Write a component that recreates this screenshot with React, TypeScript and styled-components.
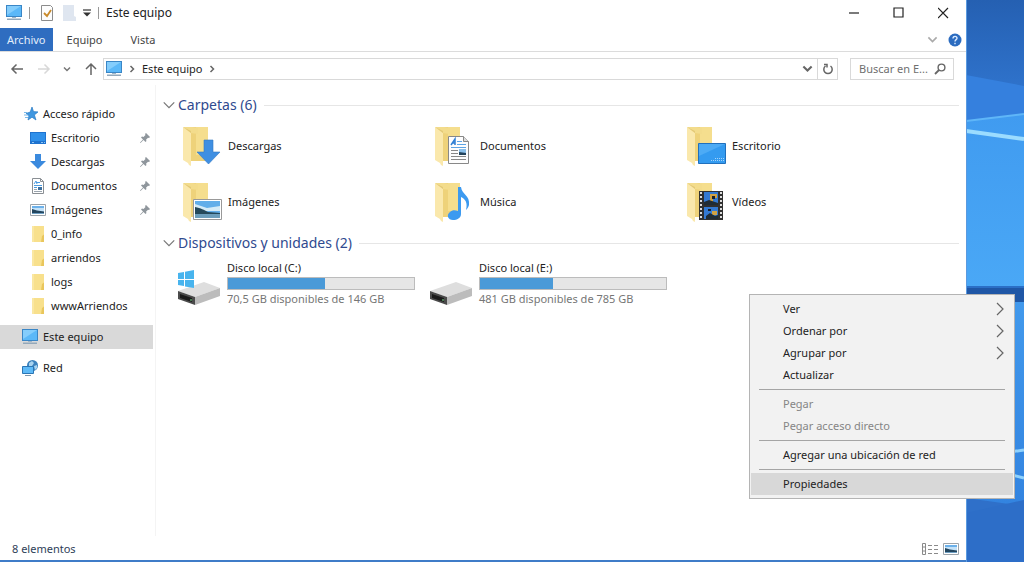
import React from "react";
import styled, { createGlobalStyle } from "styled-components";

const Global = createGlobalStyle`
  *, *::before, *::after { box-sizing: border-box; }
  body {
    margin: 0;
    font-family: "Noto Sans", "Open Sans", sans-serif;
    font-size: 12px;
    line-height: 16px;
    color: #222;
    background: #2f74cc;
  }
  button, input { font: inherit; color: inherit; }
  button { border: 0; padding: 0; background: none; cursor: default; }
  svg { display: block; flex: none; }
  ul { list-style: none; margin: 0; padding: 0; }
`;

const Desktop = styled.div`
  position: relative;
  display: flex;
  min-height: 100vh;
`;

const Wallpaper = styled.div`
  position: relative;
  flex: none;
  width: 58px;
  svg { position: absolute; inset: 0; width: 100%; height: 100%; }
`;

const Explorer = styled.main`
  flex: 1;
  min-width: 0;
  display: flex;
  flex-direction: column;
  background: #fff;
  border-bottom: 2px solid #3f7cc8;
`;

const TitleBar = styled.header`
  display: flex;
  align-items: center;
  height: 28px;
  padding: 0 0 2px 5px;
`;

const QuickTools = styled.div`
  display: flex;
  align-items: center;
  gap: 6px;
`;

const Divider = styled.span`
  width: 1px;
  height: 12px;
  background: #999;
`;

const Title = styled.h1`
  flex: 1;
  margin: 0 0 0 7px;
  font-size: 12px;
  font-weight: 400;
`;

const CaptionButton = styled.button`
  display: flex;
  align-items: center;
  justify-content: center;
  width: 45px;
  height: 26px;
`;

const Ribbon = styled.nav`
  display: flex;
  align-items: center;
  height: 24px;
  border-bottom: 1px solid #dcdcdc;
`;

const Tab = styled.button<{ $active?: boolean }>`
  height: 23px;
  padding: 0 ${(p) => (p.$active ? 7 : 14)}px;
  font-size: 11px;
  color: ${(p) => (p.$active ? "#e4eefb" : "#444")};
  background: ${(p) => (p.$active ? "#2f6dc0" : "transparent")};
`;

const RibbonEnd = styled.div`
  display: flex;
  align-items: center;
  gap: 10px;
  margin-left: auto;
  padding-right: 4px;
`;

const NavBar = styled.div`
  display: flex;
  align-items: center;
  height: 33px;
  padding: 0 12px 0 10px;
`;

const NavButtons = styled.div`
  display: flex;
  align-items: center;
  justify-content: space-between;
  width: 88px;
  margin-right: 5px;
`;

const Address = styled.div`
  flex: 1;
  display: flex;
  align-items: center;
  height: 22px;
  border: 1px solid #d9d9d9;
`;

const Crumbs = styled.div`
  flex: 1;
  display: flex;
  align-items: center;
  gap: 5px;
  padding-left: 1px;
  font-size: 11px;
  & > button { padding: 0 1px; }
`;

const AddressButton = styled.button<{ $ruled?: boolean }>`
  display: flex;
  align-items: center;
  justify-content: center;
  width: 20px;
  height: 20px;
  border-left: ${(p) => (p.$ruled ? "1px solid #d9d9d9" : "0")};
`;

const SearchBox = styled.label`
  display: flex;
  align-items: center;
  width: 104px;
  height: 22px;
  margin-left: 12px;
  padding: 0 7px 0 8px;
  border: 1px solid #d9d9d9;
  input {
    flex: 1;
    min-width: 0;
    padding: 0;
    border: 0;
    outline: 0;
    font-size: 11px;
    background: none;
  }
  input::placeholder { color: #6f6f6f; opacity: 1; }
`;

const Body = styled.div`
  flex: 1;
  display: flex;
`;

const Sidebar = styled.nav`
  flex: none;
  width: 156px;
  padding: 17px 2px 0 0;
  border-right: 1px solid #f4f4f4;
`;

const TreeItem = styled.button<{ $level?: number; $selected?: boolean; $spaced?: boolean }>`
  display: flex;
  align-items: center;
  gap: 4px;
  width: 100%;
  height: 24px;
  margin-top: ${(p) => (p.$spaced ? 7 : 0)}px;
  padding: 0 2px 0 ${(p) => (p.$level === 2 ? 29 : 21)}px;
  font-size: 11px;
  background: ${(p) => (p.$selected ? "#d9d9d9" : "transparent")};
  & > svg:last-child:not(:first-child) { margin-left: auto; }
`;

const Content = styled.section`
  flex: 1;
  min-width: 0;
  padding: 10px 7px 0 6px;
`;

const GroupHeader = styled.button`
  display: flex;
  align-items: center;
  gap: 2px;
  width: 100%;
  height: 20px;
  font-size: 14px;
  color: #2f4a8f;
  &::after {
    content: "";
    flex: 1;
    height: 1px;
    margin-left: 5px;
    background: #e6e6e6;
  }
`;

const Tiles = styled.ul<{ $indent: number }>`
  display: grid;
  grid-template-columns: repeat(auto-fill, 252px);
  padding: 3px 0 3px ${(p) => p.$indent}px;
`;

const Tile = styled.li`
  display: flex;
  align-items: center;
  gap: 6px;
  height: 56px;
  font-size: 11px;
`;

const DriveTile = styled.li`
  display: flex;
  align-items: center;
  gap: 6px;
  height: 54px;
  font-size: 11px;
`;

const DriveInfo = styled.div`
  display: flex;
  flex-direction: column;
  gap: 1px;
  width: 188px;
  small { font-size: 11px; color: #767676; white-space: nowrap; }
`;

const Gauge = styled.div`
  height: 13px;
  border: 1px solid #bcbcbc;
  background: #e6e6e6;
`;

const GaugeFill = styled.div`
  height: 100%;
  background: #4a9ad8;
`;

const StatusBar = styled.footer`
  display: flex;
  align-items: center;
  justify-content: space-between;
  height: 24px;
  padding: 2px 6px 0 12px;
  font-size: 11px;
  color: #2e4057;
`;

const ViewButtons = styled.div`
  display: flex;
  align-items: center;
  gap: 4px;
`;

const Menu = styled.div`
  position: absolute;
  top: 294px;
  right: 9px;
  width: 266px;
  padding: 3px 1px;
  border: 1px solid #b4b4b4;
  background: #f2f2f2;
`;

const MenuItem = styled.button<{ $hover?: boolean }>`
  display: flex;
  align-items: center;
  justify-content: space-between;
  width: 100%;
  height: 22px;
  padding: 0 8px 0 32px;
  font-size: 11px;
  background: ${(p) => (p.$hover ? "#d8d8d8" : "transparent")};
  &:disabled { color: #858585; }
`;

const MenuRule = styled.hr`
  height: 1px;
  margin: 3px 8px;
  border: 0;
  background: #a5a5a5;
`;

/* ---------- icons ---------- */

const Monitor = ({ w = 18 }: { w?: number }) => (
  <svg width={w} height={w} viewBox="0 0 18 18">
    <rect x="1" y="1" width="16" height="12" fill="#3a86c6" />
    <path d="M2 2h14v10H2z" fill="#5bb8f8" />
    <path d="M2 2h14L2 11z" fill="#84cdfc" />
    <path d="M7 13h4v1H7z" fill="#9fb6c8" />
    <path d="M2 14.500h14v1.500H2z" fill="#93a8ba" />
  </svg>
);

const Chevron = ({ dir = "right", s = 8, color = "#666", sw = 1.5 }: { dir?: "right" | "down"; s?: number; color?: string; sw?: number }) => (
  <svg width={s} height={s} viewBox="0 0 8 8" fill="none" stroke={color} strokeWidth={sw}>
    <path d={dir === "right" ? "M2.5 1l3 3-3 3" : "M1 2.5l3 3 3-3"} />
  </svg>
);

const Star = () => (
  <svg width="18" height="16" viewBox="0 0 18 16">
    <path d="M11 1l1.500 4.600 4.500.3-3.600 3 1.600 5.100-4-2.800L7 14l1-4.300L5 7.400l4.200-1.300z" fill="#3f97e0" stroke="#2a7bc4" strokeWidth=".7" />
    <path d="M3 9h4M4 11.500h3M3 6.500h3" stroke="#79b9ea" />
  </svg>
);

const Screen = () => (
  <svg width="18" height="16" viewBox="0 0 18 16">
    <path d="M1 2h16v12H1z" fill="#1f73cf" />
    <path d="M2 3h14v8H2z" fill="#2f90ea" />
    <path d="M3 12.500h2M12 12.500h4" stroke="#8dc4f4" strokeDasharray="2 1" />
  </svg>
);

const Arrow = () => (
  <svg width="18" height="18" viewBox="0 0 18 18">
    <path d="M6 1h6v7h5l-8 8-8-8h5z" fill="#3b8ade" />
  </svg>
);

const Page = () => (
  <svg width="18" height="18" viewBox="0 0 18 18">
    <path d="M3.500 1.500h8l3 3v12h-11z" fill="#fff" stroke="#8a8f94" />
    <path d="M11.500 1.500v3h3" fill="none" stroke="#8a8f94" />
    <path d="M5 7l2-3 1 3M8 5.500h3M5 8.500h8M5 10.500h3" fill="none" stroke="#4b9be0" />
    <path d="M5 12.500h3M5 14.500h8" stroke="#9aa4ad" />
    <path d="M9 10h4v3H9z" fill="#3c6f9e" />
  </svg>
);

const Picture = ({ w = 18 }: { w?: number }) => (
  <svg width={w} height={w} viewBox="0 0 18 18">
    <path d="M1.500 3.500h15v11h-15z" fill="#fff" stroke="#9da4aa" />
    <path d="M3 5h12v8H3z" fill="#c4e2f8" />
    <path d="M3 5h12v2H3z" fill="#6cb1ea" />
    <path d="M3 8l5 1.500 7 1V12H3z" fill="#23465f" />
    <path d="M3 12h12v1H3z" fill="#6fa0c4" />
  </svg>
);

const SmallFolder = () => (
  <svg width="18" height="18" viewBox="0 0 18 18">
    <path d="M3 1h12v16H3z" fill="#f8e08c" />
    <path d="M13 11l2-1.500V17h-3z" fill="#e9c65c" />
    <path d="M3 1h2v16H3z" fill="#fae7a2" />
  </svg>
);

const Network = () => (
  <svg width="18" height="18" viewBox="0 0 18 18">
    <circle cx="11.500" cy="6.500" r="5.500" fill="#3c82bd" />
    <path d="M8 4l3-2 2 2-2 3H8zM13 7l3-1v3l-2 2z" fill="#a9d3ef" />
    <path d="M1.500 7.500h11v7h-11z" fill="#5fbaf7" stroke="#2b76b4" />
    <path d="M4 16.500h6" stroke="#7d97ad" />
  </svg>
);

const Pin = () => (
  <svg width="12" height="12" viewBox="0 0 12 12">
    <path d="M7 1l4 4-1 1-1-.3-2 2L7.500 9l-1 1L4.500 8 1.500 11 1 10.500l3-3L2 5.500l1-1 1.500.4 2-2L6 2z" fill="#8f969c" />
  </svg>
);

const BigFolder = ({ children }: { children: React.ReactNode }) => (
  <svg width="40" height="44" viewBox="0 0 40 44">
    <path d="M9 3h17v33l-3 1H9z" fill="#eed27a" />
    <path d="M14 3h12v28H14z" fill="#f5de8e" />
    <path d="M1 3l8 5v34l-2-1-1-2-5-3z" fill="#fae8ac" />
    <path d="M1 3h9l6 1v6l-7-1z" fill="#f3dc8c" />
    <path d="M1 3l8 4v2z" fill="#e3c977" />
    {children}
  </svg>
);

const downloadBadge = <path d="M22 16h9v12h7L26.500 40 15 28h7z" fill="#3f8fe2" stroke="#3479c4" strokeWidth=".6" />;
const documentBadge = (
  <g>
    <path d="M14.500 12.500h15l5 5v22h-20z" fill="#fdfdfd" stroke="#888" />
    <path d="M29.500 12.500v5h5" fill="#ddd" stroke="#888" />
    <path d="M17 21l4-6v6M18 19h3" fill="none" stroke="#2f7fd4" strokeWidth="1.500" />
    <path d="M23 17.500h5M23 20.500h9M17 23.500h15" stroke="#5da4e4" />
    <path d="M17 26.500h7M17 29.500h7M17 32.500h15M17 35.500h15" stroke="#888" />
    <path d="M25 25h7v6h-7z" fill="#8bc0ea" />
    <path d="M25 28l7 1v2h-7z" fill="#24445c" />
  </g>
);
const desktopBadge = (
  <g>
    <path d="M12.500 19.500h27v20h-27z" fill="#349bf0" stroke="#2070bd" />
    <path d="M13 20h26L13 32z" fill="#4dabf5" />
    <path d="M25 36.500h13M29 34.500h9" stroke="#a3d4fb" strokeDasharray="1 1" />
  </g>
);
const pictureBadge = (
  <g>
    <path d="M11.500 19.500h28v20h-28z" fill="#fff" stroke="#999" />
    <path d="M13 21h25v17H13z" fill="#62aee9" />
    <path d="M13 24l12 4 13-2v5H13z" fill="#d4ebf7" />
    <path d="M13 27c6 1 9 3 13 5l12 1v2H13z" fill="#24485a" />
    <path d="M13 34h25v4H13z" fill="#6b9dbb" />
  </g>
);
const musicBadge = (
  <path d="M24 7h3c1 8 9 8 8 18-1 3-2 4-3 5 2-8-1-11-5-13v17c0 4-4 6-8 6-5 0-7-5-3-8 2-2 5-2 8-1z" fill="#3c9af0" />
);
const videoBadge = (
  <g>
    <path d="M13 11h24v29H13z" fill="#303030" />
    <path d="M15 12v28M35 12v28" stroke="#ddd" strokeWidth="2" strokeDasharray="2 2" />
    <path d="M18 12h14v13H18zM18 27h14v12H18z" fill="#3379d2" />
    <path d="M24 14h7v4h-4v4h-3zM26 31h5v4h-5z" fill="#d1a243" />
    <path d="M18 22l5-2 9 3v2H18zM20 36l4-3 5 3 3-1v4H20z" fill="#202c35" />
    <path d="M26 16h3v3h-3zM22 29h3v2h-3z" fill="#17212b" />
  </g>
);

const Drive = ({ system }: { system?: boolean }) => (
  <svg width="44" height="46" viewBox="0 -8 44 46">
    <path d="M1 23l26-9 16 6-25 9z" fill="#dedede" />
    <path d="M1 23l17 6v8L1 31z" fill="#4a4a4a" />
    <path d="M18 29l25-9v8l-25 9z" fill="#bcbcbc" />
    <path d="M3 26l12 4v4L3 30z" fill="#1a1a1a" />
    <path d="M13 32h2" stroke="#77d68a" />
    {system && (
      <path d="M1 5l6-1v7H1zM8 3.800L17 2v9H8zM1 12h6v6l-6-1zM8 12h9v8l-9-1.600z" fill="#48b4ee" />
    )}
  </svg>
);

const folders: { name: string; badge: React.ReactNode }[] = [
  { name: "Descargas", badge: downloadBadge },
  { name: "Documentos", badge: documentBadge },
  { name: "Escritorio", badge: desktopBadge },
  { name: "Imágenes", badge: pictureBadge },
  { name: "Música", badge: musicBadge },
  { name: "Vídeos", badge: videoBadge },
];

const pinned = [
  { name: "Escritorio", icon: <Screen /> },
  { name: "Descargas", icon: <Arrow /> },
  { name: "Documentos", icon: <Page /> },
  { name: "Imágenes", icon: <Picture /> },
];

const recent = ["0_info", "arriendos", "logs", "wwwArriendos"];

const drives = [
  { name: "Disco local (C:)", free: "70,5 GB disponibles de 146 GB", used: 52, system: true },
  { name: "Disco local (E:)", free: "481 GB disponibles de 785 GB", used: 39, system: false },
];

export default function App() {
  return (
    <Desktop>
      <Global />
      <Explorer>
        <TitleBar>
          <QuickTools>
            <Monitor />
            <Divider />
            <button aria-label="Propiedades del equipo">
              <svg width="20" height="18" viewBox="0 0 20 18">
                <path d="M5.500 1.500h9l2 2v13h-11z" fill="#fdfdfd" stroke="#8c8c8c" />
                <path d="M8 9l3 3 4-6" fill="none" stroke="#c98a2b" strokeWidth="1.800" />
              </svg>
            </button>
            <button aria-label="Nueva carpeta">
              <svg width="14" height="16" viewBox="0 0 14 16">
                <path d="M1 0h11v11l2 1v4H1z" fill="#dfe6f0" />
              </svg>
            </button>
            <button aria-label="Personalizar">
              <svg width="10" height="8" viewBox="0 0 10 8">
                <path d="M1 1h8" stroke="#333" strokeWidth="1.200" />
                <path d="M1 3.500h8L5 7.500z" fill="#333" />
              </svg>
            </button>
            <Divider />
          </QuickTools>
          <Title>Este equipo</Title>
          <CaptionButton aria-label="Minimizar">
            <svg width="12" height="12" viewBox="0 0 12 12"><path d="M1 6h10" stroke="#222" strokeWidth="1.200" /></svg>
          </CaptionButton>
          <CaptionButton aria-label="Maximizar">
            <svg width="12" height="12" viewBox="0 0 12 12"><path d="M1 1h9v9h-9z" fill="none" stroke="#222" strokeWidth="1.200" /></svg>
          </CaptionButton>
          <CaptionButton aria-label="Cerrar">
            <svg width="12" height="12" viewBox="0 0 12 12"><path d="M0 1l10 10M10 1L0 11" stroke="#222" strokeWidth="1.200" /></svg>
          </CaptionButton>
        </TitleBar>

        <Ribbon>
          <Tab $active>Archivo</Tab>
          <Tab>Equipo</Tab>
          <Tab>Vista</Tab>
          <RibbonEnd>
            <Chevron dir="down" s={11} color="#aaa" sw={1.2} />
            <button aria-label="Ayuda">
              <svg width="14" height="14" viewBox="0 0 14 14">
                <circle cx="7" cy="7" r="6.500" fill="#2c6cc0" />
                <path d="M5 5.500c0-3 4-2.500 4-.3C9 6.700 7 6.600 7 8.500M7 9.700v1.500" fill="none" stroke="#dcebff" strokeWidth="1.400" />
              </svg>
            </button>
          </RibbonEnd>
        </Ribbon>

        <NavBar>
          <NavButtons>
            <button aria-label="Atrás">
              <svg width="14" height="12" viewBox="0 0 14 12" fill="none" stroke="#666" strokeWidth="1.500"><path d="M13 6H2M6.500 1.500L2 6l4.500 4.500" /></svg>
            </button>
            <button aria-label="Adelante">
              <svg width="14" height="12" viewBox="0 0 14 12" fill="none" stroke="#d8d8d8" strokeWidth="1.500"><path d="M1 6h11M7.500 1.500L12 6l-4.500 4.500" /></svg>
            </button>
            <button aria-label="Ubicaciones recientes"><Chevron dir="down" color="#777" /></button>
            <button aria-label="Subir">
              <svg width="14" height="14" viewBox="0 0 14 14" fill="none" stroke="#666" strokeWidth="1.500"><path d="M7 13V2M2 7l5-5 5 5" /></svg>
            </button>
          </NavButtons>
          <Address>
            <Crumbs>
              <Monitor />
              <Chevron />
              <button>Este equipo</button>
              <Chevron />
            </Crumbs>
            <AddressButton aria-label="Historial"><Chevron dir="down" s={11} sw={1.5} /></AddressButton>
            <AddressButton $ruled aria-label="Actualizar">
              <svg width="12" height="12" viewBox="0 0 12 12" fill="none" stroke="#666" strokeWidth="1.500"><path d="M8.500 3A4.200 4.200 0 1 1 3.500 3M2 1.500h3v3" /></svg>
            </AddressButton>
          </Address>
          <SearchBox>
            <input type="text" aria-label="Buscar en Este equipo" placeholder="Buscar en E..." />
            <svg width="12" height="12" viewBox="0 0 12 12" fill="none" stroke="#666"><circle cx="7.500" cy="4.500" r="3.400" strokeWidth="1.400" /><path d="M5 7L1 11" strokeWidth="1.800" /></svg>
          </SearchBox>
        </NavBar>

        <Body>
          <Sidebar>
            <TreeItem><Star />Acceso rápido</TreeItem>
            {pinned.map((p) => (
              <TreeItem key={p.name} $level={2}>{p.icon}{p.name}<Pin /></TreeItem>
            ))}
            {recent.map((name) => (
              <TreeItem key={name} $level={2}><SmallFolder />{name}</TreeItem>
            ))}
            <TreeItem $selected $spaced><Monitor />Este equipo</TreeItem>
            <TreeItem $spaced><Network />Red</TreeItem>
          </Sidebar>
          <Content>
            <GroupHeader><Chevron dir="down" s={14} color="#777" sw={0.7} />Carpetas (6)</GroupHeader>
            <Tiles $indent={20}>
              {folders.map((f) => (
                <Tile key={f.name}><BigFolder>{f.badge}</BigFolder>{f.name}</Tile>
              ))}
            </Tiles>
            <GroupHeader><Chevron dir="down" s={14} color="#777" sw={0.7} />Dispositivos y unidades (2)</GroupHeader>
            <Tiles $indent={15}>
              {drives.map((d) => (
                <DriveTile key={d.name}>
                  <Drive system={d.system} />
                  <DriveInfo>
                    <span>{d.name}</span>
                    <Gauge role="meter" aria-label={d.name} aria-valuenow={d.used} aria-valuemin={0} aria-valuemax={100}>
                      <GaugeFill style={{ width: `${d.used}%` }} />
                    </Gauge>
                    <small>{d.free}</small>
                  </DriveInfo>
                </DriveTile>
              ))}
            </Tiles>
          </Content>
        </Body>

        <StatusBar>
          <span>8 elementos</span>
          <ViewButtons>
            <button aria-label="Detalles">
              <svg width="17" height="14" viewBox="0 0 17 14" fill="none" stroke="#8a8a8a">
                <path d="M1.500 1.500h3v11h-3zM1 5h4M1 9h4" />
                <path d="M7 3.500h4M13 3.500h4M7 7.500h4M13 7.500h4M7 11.500h4M13 11.500h4" />
              </svg>
            </button>
            <button aria-label="Iconos grandes"><Picture /></button>
          </ViewButtons>
        </StatusBar>
      </Explorer>

      <Wallpaper>
        <svg viewBox="0 0 58 562" preserveAspectRatio="none">
          <defs>
            <linearGradient id="sky" x1="0" y1="0" x2="0" y2="1">
              <stop offset="0" stopColor="#2560b2" />
              <stop offset="1" stopColor="#2f73cc" />
            </linearGradient>
            <linearGradient id="pane" x1="0" y1="0" x2="0" y2="1">
              <stop offset="0" stopColor="#409bf0" />
              <stop offset="1" stopColor="#4aa8f6" />
            </linearGradient>
            <linearGradient id="floor" x1="0" y1="0" x2="0" y2="1">
              <stop offset="0" stopColor="#4299ec" />
              <stop offset="1" stopColor="#3384e0" />
            </linearGradient>
          </defs>
          <path d="M0 0h58v90H0z" fill="url(#sky)" />
          <path d="M0 75l58 11v45H0z" fill="#3580de" />
          <path d="M0 121l58-7v176H0z" fill="url(#pane)" />
          <path d="M0 121l58-7" stroke="#5fb6f8" strokeWidth="2" />
          <path d="M0 131l58 8" stroke="#9bdcff" strokeWidth="4" />
          <path d="M0 287h58v15H0z" fill="#1f57a6" />
          <path d="M0 287h58" stroke="#2a6fc6" strokeWidth="2" />
          <path d="M0 302h58v202H0z" fill="url(#floor)" />
          <path d="M30 454l28-4M46 475l12 3" stroke="#8fd2fd" strokeWidth="3" />
          <path d="M0 498l58 8v56H0z" fill="#2f70c9" />
          <path d="M0 513L58 500v62H0z" fill="#2d6ec8" />
          <path d="M.5 0v562" stroke="#5a9ae0" />
        </svg>
      </Wallpaper>

      <Menu role="menu">
        {["Ver", "Ordenar por", "Agrupar por"].map((label) => (
          <MenuItem key={label} role="menuitem">{label}
            <svg width="10" height="14" viewBox="0 0 10 14" fill="none" stroke="#666" strokeWidth="1.200"><path d="M2 1l6 6-6 6" /></svg>
          </MenuItem>
        ))}
        <MenuItem role="menuitem">Actualizar</MenuItem>
        <MenuRule />
        <MenuItem role="menuitem" disabled>Pegar</MenuItem>
        <MenuItem role="menuitem" disabled>Pegar acceso directo</MenuItem>
        <MenuRule />
        <MenuItem role="menuitem">Agregar una ubicación de red</MenuItem>
        <MenuRule />
        <MenuItem role="menuitem" $hover>Propiedades</MenuItem>
      </Menu>
    </Desktop>
  );
}
